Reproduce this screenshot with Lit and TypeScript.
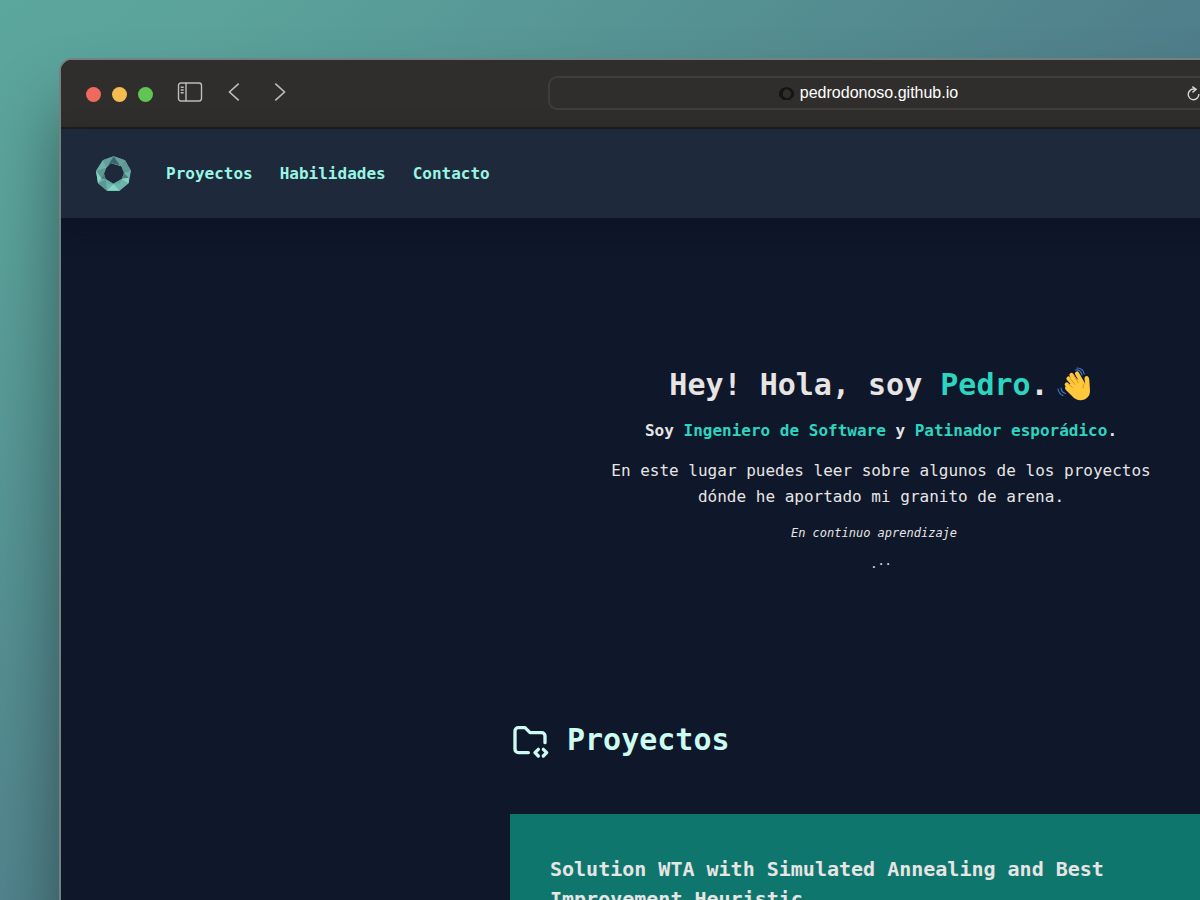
import { LitElement, html, css } from "lit";
import { customElement } from "lit/decorators.js";

@customElement("browser-bar")
class BrowserBar extends LitElement {
  static styles = css`
    :host {
      display: grid;
      grid-template-columns: 1fr 666px 1fr;
      box-sizing: border-box;
      height: 69px;
      padding-bottom: 1px;
      align-items: center;
      background: #2f2e2c;
      border-bottom: 2px solid #1f1e1c;
    }
    .controls { display: flex; align-items: center; padding: 0 0 2px 25px; }
    .lights { display: flex; gap: 11px; margin: 5px 24px 0 0; }
    .light { width: 15px; height: 15px; border-radius: 50%; }
    .close { background: #ee6a5f; }
    .minimize { background: #f5bd4f; }
    .zoom { background: #61c554; }
    .tool {
      display: flex;
      padding: 0;
      border: 0;
      background: none;
      color: #bdbcbb;
    }
    .back { margin-left: 25px; }
    .forward { margin-left: 34px; }
    .address {
      display: flex;
      align-items: center;
      box-sizing: border-box;
      height: 34px;
      padding: 0 12px 0 0;
      border: 2px solid #3e3d3c;
      border-radius: 9px;
      font: 16px/20px "Liberation Sans", Arial, sans-serif;
      color: #fff;
    }
    .site { display: flex; flex: 1; align-items: center; justify-content: center; gap: 6px; }
  `;
  render() {
    return html`
      <div class="controls">
        <div class="lights">
          <span class="light close"></span><span class="light minimize"></span><span class="light zoom"></span>
        </div>
        <button class="tool" aria-label="Barra lateral">
          <svg width="26" height="20" viewBox="0 0 26 20" fill="none" stroke="currentColor" stroke-width="1.4">
            <rect x="1.5" y="1" width="23" height="18" rx="2.4" />
            <path d="M9 1v18M3.7 5.3h3M3.7 8h3M3.7 10.8h3" />
          </svg>
        </button>
        <button class="tool back" aria-label="Atrás">
          <svg width="12" height="18" viewBox="0 0 12 18" fill="none" stroke="currentColor" stroke-width="1.6"><path d="M10.7 .7 1.5 9l9.2 8.3" /></svg>
        </button>
        <button class="tool forward" aria-label="Adelante">
          <svg width="12" height="18" viewBox="0 0 12 18" fill="none" stroke="currentColor" stroke-width="1.6"><path d="M1.3 .7 10.5 9l-9.2 8.3" /></svg>
        </button>
      </div>
      <div class="address">
        <span class="site">
          <svg width="15" height="13" viewBox="0 0 15 13"><path fill="#151514" fill-rule="evenodd" d="M7.5 0 12 1.2 15 5v4l-4 4H4L0 9V5l3-3.8ZM7 2 4 5v4l3 2h3l2-3V5L9 2.6Z" /></svg>
          <span>pedrodonoso.github.io</span>
        </span>
        <button class="tool" aria-label="Recargar">
          <svg width="13" height="15" viewBox="0 0 13 15" fill="none" stroke="#d6d5d4" stroke-width="1.4"><path d="M7.6 3.2A5.3 5.3 0 1 0 11.8 8M5.3 .6l3.8 2.8-3.6 3" /></svg>
        </button>
      </div>
    `;
  }
}

@customElement("app-root")
class AppRoot extends LitElement {
  static styles = css`
    :host {
      display: block;
      box-sizing: border-box;
      height: 100vh;
      overflow: hidden;
      padding: 58px 0 0 59px;
      background: linear-gradient(140deg, #5ba69d 0%, #5ba39b 10%, #4e7a88 60%, #4d7485 100%);
      font-family: "DejaVu Sans Mono", monospace;
      color: #e7e5e4;
    }
    .window {
      box-sizing: border-box;
      width: 137vw;
      min-height: 100vh;
      border: 2px solid #738280;
      border-radius: 13px;
      overflow: hidden;
      background: #0f172a;
      box-shadow: 0 50px 70px rgba(0, 0, 0, 0.4);
    }
    .nav {
      display: flex;
      align-items: center;
      height: 89px;
      padding: 0 35px;
      gap: 35px;
      background: #1e293b;
      box-shadow: 0 10px 24px rgba(12, 8, 30, 0.35);
    }
    .logo, .logo svg { display: block; }
    .links { display: flex; gap: 27px; }
    .link { color: #99f6e4; font-size: 16px; line-height: 24px; font-weight: 700; text-decoration: none; }
    .hero {
      display: flex;
      flex-direction: column;
      align-items: center;
      max-width: 560px;
      margin: 0 auto;
      padding: 147px 0 145px;
      text-align: center;
    }
    .accent { color: #2dd4bf; }
    h1, h2, h3, p { margin: 0; }
    .title { display: flex; align-items: center; gap: 8px; font-size: 30px; line-height: 40px; white-space: nowrap; }
    .role { margin-top: 14px; font-size: 16px; line-height: 24px; font-weight: 700; white-space: nowrap; }
    .intro { margin-top: 15px; font-size: 16px; line-height: 26px; }
    .motto { margin-top: 14px; padding-right: 14px; font-size: 12px; line-height: 18px; font-style: italic; }
    .dots { display: flex; margin-top: 13px; font-size: 12px; line-height: 18px; }
    .raised { margin-top: -3px; }
    .projects { max-width: 742px; margin: 0 auto; }
    .heading { display: flex; align-items: center; gap: 17px; color: #ccfbf1; font-size: 30px; line-height: 40px; }
    .heading svg { margin-top: 3px; }
    .card { margin-top: 53px; padding: 40px; background: #0f766e; }
    .name { font-size: 20px; line-height: 30px; }
  `;
  render() {
    return html`
      <div class="window">
        <browser-bar></browser-bar>
        <nav class="nav">
          <a class="logo" href="#" aria-label="Inicio">
            <svg width="35" height="35" viewBox="33 36 105 103">
              <path fill="#6fb4aa" fill-rule="evenodd" d="M86 36 120 48 138 79 131 117 104 139H66L39 117 33 79 53 48ZM77 56 64 70 57 88 62 104 85 118 110 104 117 86 109 66Z" />
              <path fill="#659f9b" d="M86 36 120 48 109 66 77 56 64 70 53 48Z" />
              <path fill="#40646c" d="M86 36 104 62 77 56 70 62Z" />
              <path fill="#518583" d="M109 66 138 79 117 86ZM64 70 57 88 49 102 33 79Z" opacity=".6" />
              <path fill="#5c9994" d="M120 48 138 79 109 66ZM39 117 62 104 66 139Z" />
              <path fill="#4d7d7d" d="M117 86 131 100 110 104ZM57 88 62 104 49 104Z" />
              <path fill="#84d5c4" d="M33 79 49 102 39 117ZM85 119 104 139H66ZM131 100 131 117 110 104Z" />
              <path fill="#60a59b" d="M62 104 85 118 110 104 104 120H68Z" opacity=".7" />
            </svg>
          </a>
          <div class="links">
            <a class="link" href="#proyectos">Proyectos</a>
            <a class="link" href="#habilidades">Habilidades</a>
            <a class="link" href="#contacto">Contacto</a>
          </div>
        </nav>
        <main>
          <section class="hero">
            <h1 class="title">
              <span>Hey! Hola, soy <span class="accent">Pedro</span>.</span>
              <svg width="36" height="36" viewBox="0 0 36 36" role="img" aria-label="Saludo">
                <path fill="#ffc83d" d="M10 19 21 12 28 16 27.4 11.5Q27.5 8.500 30 9 32 9.500 32.300 13L33 24Q33 30 27.500 32.500 20 35 14.500 28.500L8.500 22.500Q7 19 10 19Z" />
                <path d="M21 22 11.500 11.500M23 20 14.500 8M27 19 20 6.500M18 25 9.800 17.500" fill="none" stroke="#ffc83d" stroke-width="4.200" stroke-linecap="round" />
                <path d="m13 11.500 5 6M17.200 9l4 6.500M11.500 17l4 3.500M28 16q-2.500 2-2 5" fill="none" stroke="#e08a10" stroke-width=".9" stroke-linecap="round" />
                <path d="M18.500 3q5-1 6.500 5M20 1q6 0 7.200 6M4 21q.5 4.500 4.500 5.500M1 22q1 5 5 6.500" fill="none" stroke="#4276c9" stroke-width="1.200" stroke-linecap="round" />
              </svg>
            </h1>
            <p class="role">Soy <span class="accent">Ingeniero de Software</span> y <span class="accent">Patinador esporádico</span>.</p>
            <p class="intro">En este lugar puedes leer sobre algunos de los proyectos dónde he aportado mi granito de arena.</p>
            <p class="motto">En continuo aprendizaje</p>
            <div class="dots"><span>.</span><span class="raised">.</span><span class="raised">.</span></div>
          </section>
          <section class="projects" id="proyectos">
            <h2 class="heading">
              <svg width="40" height="40" viewBox="0 0 24 24" fill="none" stroke="currentColor" stroke-width="2" stroke-linecap="round" stroke-linejoin="round">
                <path d="M11 19H5a2 2 0 0 1-2-2V6a2 2 0 0 1 2-2h4l3 3h7a2 2 0 0 1 2 2v4" />
                <path d="m20 21 2-2-2-2M17 17l-2 2 2 2" />
              </svg>
              <span>Proyectos</span>
            </h2>
            <article class="card">
              <h3 class="name">Solution WTA with Simulated Annealing and Best Improvement Heuristic</h3>
            </article>
          </section>
        </main>
      </div>
    `;
  }
}
